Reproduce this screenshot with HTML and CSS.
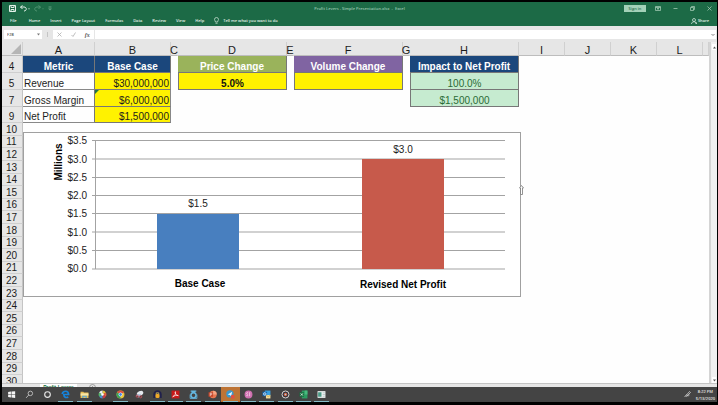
FILE: index.html
```html
<!DOCTYPE html>
<html lang="en">
<head>
<meta charset="utf-8">
<title>Profit Levers - Simple Presentation.xlsx - Excel</title>
<link rel="stylesheet" href="styles.css">
</head>
<body>
<header class="ribbon">
  <div class="titlebar">
    <div class="quick">
      <button aria-label="Save"><svg width="7" height="7" viewBox="0 0 14 14" fill="none" stroke="#e4f1e9" stroke-width="2"><path d="M1 1h12v12H1zM4 1v4h6V1M4 13V9h6v4"/></svg></button>
      <button aria-label="Undo"><svg width="10" height="7" viewBox="0 0 20 14" fill="none" stroke="#e4f1e9" stroke-width="2"><path d="M5 1L1 4l4 4M1 4h7c6 0 6 8 0 8"/><path d="M16 7h4l-2 2z" fill="#e4f1e9" stroke="none"/></svg></button>
      <button aria-label="Redo"><svg width="10" height="7" viewBox="0 0 20 14" fill="none" stroke="#4f9271" stroke-width="2"><path d="M9 1l4 3-4 4M13 4H6c-6 0-6 8 0 8"/><path d="M16 7h4l-2 2z" fill="#4f9271" stroke="none"/></svg></button>
      <button aria-label="Customize toolbar"><svg width="4" height="5" viewBox="0 0 8 10" fill="#5e9d7e"><path d="M1 1h6v2H1zM0 5h8L4 9z"/></svg></button>
    </div>
    <div class="doc-name">Profit Levers - Simple Presentation.xlsx &nbsp;-&nbsp; Excel</div>
    <div class="window-tools">
      <button class="signin">Sign in</button>
      <button aria-label="Ribbon options"><svg width="6" height="5" viewBox="0 0 12 10" fill="none" stroke="#a5cdb7" stroke-width="1.5"><path d="M1 1h10v8H1zM1 3h10M6 8V5M4 6l2-2 2 2"/></svg></button>
      <button aria-label="Minimize"><svg width="5" height="5" viewBox="0 0 10 10" stroke="#a5cdb7" stroke-width="1.5"><path d="M1 5h8"/></svg></button>
      <button aria-label="Restore"><svg width="5" height="5" viewBox="0 0 10 10" fill="none" stroke="#a5cdb7" stroke-width="1.5"><path d="M1 3h6v6H1zM3 3V1h6v6H7"/></svg></button>
      <button aria-label="Close"><svg width="5" height="5" viewBox="0 0 10 10" stroke="#a5cdb7" stroke-width="1.5"><path d="M1 1l8 8M9 1L1 9"/></svg></button>
    </div>
  </div>
  <nav class="tabs">
    <button class="file">File</button>
    <button>Home</button>
    <button>Insert</button>
    <button>Page Layout</button>
    <button>Formulas</button>
    <button>Data</button>
    <button>Review</button>
    <button>View</button>
    <button>Help</button>
    <button class="tell"><svg width="5" height="7" viewBox="0 0 10 14" fill="none" stroke="#d5e9dd" stroke-width="1.4"><path d="M3 10C3 8 1 7 1 5a4 4 0 0 1 8 0c0 2-2 3-2 5zM3 12.500h4"/></svg>Tell me what you want to do</button>
    <button class="share"><svg width="6" height="6" viewBox="0 0 12 12" fill="none" stroke="#e4f1e9" stroke-width="1.4"><circle cx="6" cy="4" r="3"/><path d="M1 12c0-6 10-6 10 0M8 10h4"/></svg>Share</button>
  </nav>
</header>

<div class="formula-bar">
  <div class="name-box"><input aria-label="Name box" value="F28"><svg width="3" height="3" viewBox="0 0 6 6" fill="#777"><path d="M0 1h6L3 5z"/></svg></div>
  <span class="grip"></span>
  <div class="entry-tools">
    <button aria-label="Cancel"><svg width="5" height="5" viewBox="0 0 10 10" stroke="#aaa" stroke-width="1.500"><path d="M1 1l8 8M9 1L1 9"/></svg></button>
    <button aria-label="Enter"><svg width="5" height="5" viewBox="0 0 10 10" fill="none" stroke="#aaa" stroke-width="1.500"><path d="M1 6l3 3 5-8"/></svg></button>
    <button class="fx" aria-label="Insert function">fx</button>
  </div>
  <div class="formula"><input aria-label="Formula"><svg width="4" height="4" viewBox="0 0 8 8" fill="none" stroke="#666" stroke-width="1.600"><path d="M1 2l3 3 3-3"/></svg></div>
</div>

<main class="workspace">
  <div class="sheet">
    <table>
      <colgroup><col class="c-num"><col class="c-a"><col class="c-b"><col class="c-gap"><col class="c-wide"><col class="c-gap"><col class="c-wide"><col class="c-gap"><col class="c-wide"><col class="c-std"><col class="c-std"><col class="c-std"><col class="c-std"><col></colgroup>
      <thead>
        <tr><th class="corner"><svg width="10" height="10" viewBox="0 0 10 10" fill="#b5b5b5"><path d="M10 0v10H0z"/></svg></th><th>A</th><th>B</th><th class="slim"><span>C</span></th><th>D</th><th class="slim"><span>E</span></th><th>F</th><th class="slim"><span>G</span></th><th>H</th><th>I</th><th>J</th><th>K</th><th>L</th><th></th></tr>
      </thead>
      <tbody class="model">
        <tr><th>4</th><td class="head navy">Metric</td><td class="head navy">Base Case</td><td></td><td class="head olive">Price Change</td><td></td><td class="head purple">Volume Change</td><td></td><td class="head navy">Impact to Net Profit</td></tr>
        <tr><th>5</th><td class="label">Revenue</td><td class="money">$30,000,000</td><td></td><td class="driver">5.0%</td><td></td><td class="driver"></td><td></td><td class="impact">100.0%</td></tr>
        <tr><th>7</th><td class="label">Gross Margin</td><td class="money flagged">$6,000,000</td><td></td><td></td><td></td><td></td><td></td><td class="impact">$1,500,000</td></tr>
        <tr><th>9</th><td class="label">Net Profit</td><td class="money">$1,500,000</td></tr>
      </tbody>
      <tbody class="blank">
        <tr><th>10</th></tr><tr><th>11</th></tr><tr><th>12</th></tr><tr><th>13</th></tr><tr><th>14</th></tr><tr><th>15</th></tr><tr><th>16</th></tr>
        <tr><th>17</th></tr><tr><th>18</th></tr><tr><th>19</th></tr><tr><th>20</th></tr><tr><th>21</th></tr><tr><th>22</th></tr><tr><th>23</th></tr>
        <tr><th>24</th></tr><tr><th>25</th></tr><tr><th>26</th></tr><tr><th>27</th></tr><tr><th>28</th></tr><tr><th>29</th></tr><tr><th>30</th></tr>
      </tbody>
    </table>
    <svg class="chart" width="498" height="165" viewBox="0 0 498 165" role="img" aria-label="Net profit in millions, base case and revised">
      <rect class="frame" x="0.500" y="0.500" width="497" height="164"/>
      <path class="lines" d="M69 8.500H482M69 27H482M69 45.500H482M69 63.500H482M69 81.500H482M69 100H482M69 118.500H482M69 137H482M72.500 8V137"/>
      <rect x="134" y="82" width="82" height="55" fill="#487fbf"/>
      <rect x="339" y="27" width="82" height="110" fill="#c75a4b"/>
      <g class="axis">
        <text x="64" y="12">$3.5</text><text x="64" y="31">$3.0</text><text x="64" y="49">$2.5</text><text x="64" y="67">$2.0</text><text x="64" y="85">$1.5</text><text x="64" y="104">$1.0</text><text x="64" y="122">$0.5</text><text x="64" y="140">$0.0</text>
      </g>
      <g class="values"><text x="175" y="75">$1.5</text><text x="380" y="21">$3.0</text></g>
      <g class="names"><text x="177" y="155">Base Case</text><text x="380" y="156">Revised Net Profit</text><text transform="translate(39 30) rotate(-90)">Millions</text></g>
    </svg>
    <svg class="pointer" width="5" height="10" viewBox="0 0 5 10" fill="#fff" stroke="#777" stroke-width="0.800"><path d="M2.500 .5L4.500 3H3.500V9.500H1.500V3H.5z"/></svg>
  </div>
  <div class="scroll">
    <button aria-label="Scroll up"><svg width="3" height="3" viewBox="0 0 6 6" fill="#555"><path d="M0 5h6L3 1z"/></svg></button>
    <button aria-label="Scroll down"><svg width="3" height="3" viewBox="0 0 6 6" fill="#555"><path d="M0 1h6L3 5z"/></svg></button>
  </div>
</main>

<div class="sheet-tabs"><button class="sheet-tab">Profit Levers</button><button class="add" aria-label="New sheet"><svg width="7" height="7" viewBox="0 0 14 14" fill="none" stroke="#888" stroke-width="1.500"><circle cx="7" cy="7" r="6"/><path d="M7 4v6M4 7h6"/></svg></button></div>

<footer class="taskbar">
  <div class="apps">
    <button aria-label="Start"><svg viewBox="0 0 16 16" fill="#f4f4f4"><path d="M2 3.500l5-.7v4.700H2zM8 2.600L14.500 2v5.500H8zM2 8.500h5v4.700l-5-.7zM8 8.500h6.500V14L8 13.300z"/></svg></button>
    <button aria-label="Search"><svg viewBox="0 0 16 16" fill="none" stroke="#c8c8c8" stroke-width="1.500"><circle cx="9.500" cy="6" r="4"/><path d="M6.500 9L2 14"/></svg></button>
    <button aria-label="Cortana"><svg viewBox="0 0 16 16" fill="none" stroke="#e8e8e8" stroke-width="2"><circle cx="8" cy="8" r="5"/></svg></button>
    <button class="open" aria-label="Edge"><svg viewBox="0 0 16 16" fill="none" stroke="#1683dc" stroke-width="3"><path d="M2 7C4 1 13 0 13.500 8H5c0 6 5 6 8 4.500"/></svg></button>
    <button class="open" aria-label="File Explorer"><svg viewBox="0 0 16 16"><path d="M1 3h5l1 1.500h8V14H1z" fill="#e9bd55"/><path d="M1 6h14v4H1z" fill="#f9e6a5"/><path d="M4 10h8v4h-2v-2H6v2H4z" fill="#55a6d6"/></svg></button>
    <button aria-label="Photos"><svg viewBox="0 0 16 16"><path d="M8 8V1a7 7 0 0 1 6 3.500z" fill="#e5c43c"/><path d="M8 8l6-3.500A7 7 0 0 1 14 11.500z" fill="#e25b40"/><path d="M8 8l6 3.500A7 7 0 0 1 8 15z" fill="#c93c46"/><path d="M8 8v7a7 7 0 0 1-6-3.500z" fill="#4b8fd0"/><path d="M8 8l-6 3.500A7 7 0 0 1 2 4.500z" fill="#57b56a"/><path d="M8 8L2 4.500A7 7 0 0 1 8 1z" fill="#e9eef0"/><circle cx="8" cy="8" r="2.200" fill="#fff"/></svg></button>
    <button class="open" aria-label="Chrome"><svg viewBox="0 0 16 16"><circle cx="8" cy="8" r="7" fill="#e8c13a"/><path d="M8 8L1.900 4.500A7 7 0 0 1 14.500 5.200H8z" fill="#dc4c3f"/><path d="M8 8v7A7 7 0 0 1 1.900 4.500z" fill="#36a35b"/><circle cx="8" cy="8" r="3.400" fill="#fff"/><circle cx="8" cy="8" r="2.500" fill="#4384e8"/></svg></button>
    <button aria-label="Snipping Tool"><svg viewBox="0 0 16 16"><ellipse cx="9" cy="6" rx="6" ry="4" fill="#e6e9ee" transform="rotate(-25 9 6)"/><path d="M2 10l6-2M6 13l4-5" stroke="#92b6d4" stroke-width="2"/><circle cx="4" cy="11" r="2" fill="none" stroke="#c84c54" stroke-width="1.500"/><circle cx="10" cy="12" r="2" fill="none" stroke="#c84c54" stroke-width="1.500"/></svg></button>
    <button class="open" aria-label="Audacity"><svg viewBox="0 0 16 16"><path d="M2 14V8a6 6 0 0 1 12 0v6" fill="none" stroke="#20204c" stroke-width="3"/><rect x="4.500" y="7" width="7" height="7" rx="2" fill="#f0a928"/><path d="M6 7V5h4v2" stroke="#efd06b" fill="none"/></svg></button>
    <button class="open" aria-label="Acrobat"><svg viewBox="0 0 16 16"><rect x="1" y="1" width="14" height="14" fill="#c91919"/><path d="M3 12c4-2 6-6 5-9-2 0 0 7 5 7-3-1-7 0-10 2z" fill="none" stroke="#fff" stroke-width="1.200"/></svg></button>
    <button class="open" aria-label="Snagit"><svg viewBox="0 0 16 16" fill="none" stroke="#65b9e2"><path d="M3 2h10M5 4h6" stroke-width="2"/><circle cx="8" cy="9.500" r="4.500" stroke-width="2.500"/><path d="M2 8v7h12V8" stroke-width="1.500"/></svg></button>
    <button class="open" aria-label="PowerPoint"><svg viewBox="0 0 16 16"><circle cx="9" cy="8" r="6.500" fill="#e87650"/><path d="M9 1.500A6.500 6.500 0 0 1 15.500 8H9z" fill="#f6a482"/><rect x="1" y="4" width="8" height="8" fill="#c3452a"/><path d="M4 10.500v-5h1.500a1.500 1.500 0 0 1 0 3H4" fill="none" stroke="#fff"/></svg></button>
    <button class="open alert" aria-label="Messenger"><svg viewBox="0 0 16 16"><circle cx="7" cy="7" r="6.500" fill="#3999cf"/><path d="M3 8l8-5-2 8-2-2z" fill="#eef7fc"/><circle cx="12" cy="12" r="3.500" fill="#e35040"/></svg></button>
    <button class="open" aria-label="Music"><svg viewBox="0 0 16 16"><circle cx="8" cy="8" r="7" fill="#cf70b0"/><path d="M7 5c-3-1-3 2-1 3s1 3-2 2M10 4v7" fill="none" stroke="#f8d9ec" stroke-width="1.400"/></svg></button>
    <button class="open" aria-label="Outlook"><svg viewBox="0 0 16 16"><rect x="5" y="1" width="10" height="9" fill="#39a0e0"/><rect x="1" y="3" width="8" height="8" fill="#0f68b8"/><circle cx="5" cy="7" r="2.200" fill="none" stroke="#fff" stroke-width="1.300"/><path d="M7 9h8v6H7z" fill="#f4dd9b"/><path d="M7 9l4 3 4-3" fill="none" stroke="#c69c3e"/></svg></button>
    <button class="open" aria-label="Recorder"><svg viewBox="0 0 16 16"><circle cx="8" cy="8" r="6.200" fill="#30303c" stroke="#e9e4e0" stroke-width="1.600"/><circle cx="8" cy="8" r="3" fill="#d9683f"/><circle cx="8" cy="8" r="1.300" fill="#a9cdf0"/></svg></button>
    <button class="open" aria-label="Excel"><svg viewBox="0 0 16 16"><rect x="5" y="1" width="10" height="14" fill="#2c9c62"/><path d="M10 1h5v7h-5z" fill="#48ba7e"/><rect x="1" y="4" width="8" height="8" fill="#15703f"/><path d="M3 6l4 4M7 6l-4 4" stroke="#fff" stroke-width="1.300"/></svg></button>
    <button class="open" aria-label="Notes"><svg viewBox="0 0 16 16"><rect x="1" y="2" width="14" height="12" fill="#eef3f3"/><path d="M2 4h6v8H2z" fill="#4b9a86"/><path d="M10 5h4M10 8h4M10 11h4" stroke="#98aaaa"/></svg></button>
  </div>
  <div class="tray">
    <svg width="7" height="7" viewBox="0 0 14 14" fill="none" stroke="#d0d0d0" stroke-width="1.600"><path d="M1 12c2-5 5 2 6-3M5 8l6-7 2 2-6 6zM3 9c3-3 6 3 8-1"/></svg>
    <div class="clock"><time>8:22 PM</time><time>5/13/2020</time></div>
  </div>
</footer>
</body>
</html>
```
FILE: styles.css
```css
* { box-sizing: border-box; }
body {
  margin: 0;
  padding: 2px 1px 3px 2px;
  height: 100vh;
  overflow: hidden;
  display: flex;
  flex-direction: column;
  background: #000;
  font: 10px/12px "Liberation Sans", Arial, sans-serif;
  color: #1c1c1c;
}
button, input {
  margin: 0;
  padding: 0;
  border: 0;
  border-radius: 0;
  background: none;
  color: inherit;
  font: inherit;
  min-width: 0;
}
svg { display: block; flex: none; }

.ribbon, .formula-bar, .taskbar { font: 600 4px/7px "Open Sans", "Noto Sans", sans-serif; }
.ribbon { flex: none; background: #1c6a46; color: #e4f1e9; }
.titlebar {
  display: grid;
  grid-template-columns: 1fr auto 1fr;
  align-items: center;
  height: 13px;
}
.quick { display: flex; align-items: center; gap: 4px; padding-left: 7px; }
.doc-name { color: #9bc7af; }
.window-tools { display: flex; align-items: center; justify-content: flex-end; gap: 12px; padding-right: 5px; }
.signin { width: 22px; height: 7px; margin-right: -3px; background: #a3d1b8; color: #2b7150; }
.tabs { display: flex; align-items: center; gap: 10px; height: 11px; padding: 0 8px; }
.file { margin-right: 2px; }
.tell, .share { display: flex; align-items: center; gap: 4px; }
.share { margin-left: auto; gap: 1px; }

.formula-bar {
  flex: none;
  display: flex;
  align-items: center;
  height: 16px;
  padding: 1px 1px 0 2px;
  background: #e6e6e6;
  color: #555;
}
.name-box, .entry-tools, .formula { display: flex; align-items: center; height: 9px; background: #fff; }
.name-box { width: 38px; padding: 0 2px 0 3px; }
.name-box input, .formula input { flex: 1; height: 9px; }
.grip { width: 1px; height: 5px; margin: 0 5px; background: #c4c4c4; }
.entry-tools { width: 41px; justify-content: space-around; }
.fx { font: italic bold 6px/8px "Liberation Serif", serif; }
.formula { flex: 1; margin-left: 1px; padding-right: 1px; }

.workspace { flex: 1; min-height: 0; display: flex; background: #e6e6e6; }
.sheet { position: relative; flex: 1; overflow: hidden; background: #fefefe; }
table { width: 100%; table-layout: fixed; border-collapse: separate; border-spacing: 0; }
.c-num { width: 21px; }
.c-a { width: 72px; }
.c-b { width: 76px; }
.c-gap { width: 7px; }
.c-wide { width: 109px; }
.c-std { width: 46px; }
th, td { padding: 0; vertical-align: bottom; white-space: nowrap; }
th { background: #e6e6e6; font-weight: normal; text-align: center; }
thead th { height: 14px; font-size: 11px; line-height: 10px; border-right: 1px solid #d0d0d0; border-bottom: 1px solid #bdbdbd; }
thead .slim { border-right-color: #e6e6e6; }
.slim span { display: flex; justify-content: center; }
.corner svg { margin: 0 1px 1px auto; }
tbody th { border-right: 1px solid #c4c4c4; border-bottom: 1px solid #cfcfcf; padding-right: 1px; }
.model th, .model td { height: 17px; line-height: 10px; }
.model tr:last-child > * { height: 16px; }
.blank th { height: 13px; line-height: 10px; }
.blank tr:nth-child(5n+2) th, .blank tr:nth-child(5n) th { height: 12px; }
.head { color: #fff; font-weight: bold; text-align: center; border-right: 1px solid #777; border-bottom: 1px solid #777; }
.navy { background: #1b477c; }
.olive { background: #9ab35b; }
.purple { background: #8064a2; }
.label { padding-left: 1px; border-right: 1px solid #777; border-bottom: 1px solid #888; }
.money { position: relative; padding-right: 1px; background: #fff200; text-align: right; border-right: 1px solid #888; border-bottom: 1px solid #777; }
.flagged::before { content: ""; position: absolute; left: 0; top: 0; border-top: 4px solid #217346; border-right: 4px solid transparent; }
.driver { background: #fff200; color: #111; font-weight: bold; text-align: center; border: 1px solid #777; border-top: 0; }
.impact { background: #c6ebd0; color: #2a6b35; text-align: center; border: 1px solid #777; border-top: 0; }

.chart { position: absolute; left: 21px; top: 90px; }
.frame { fill: #fff; stroke: #a0a0a0; }
.lines { fill: none; stroke: #a3a3a3; }
.chart text { fill: #222; }
.axis text { text-anchor: end; }
.values text, .names text { text-anchor: middle; }
.chart .names text { fill: #000; font-weight: bold; }
.pointer { position: absolute; left: 517px; top: 143px; }

.scroll {
  display: flex;
  flex-direction: column;
  justify-content: space-between;
  width: 8px;
  padding: 2px 1px 0;
  border-left: 2px solid #d4d4d4;
  background: #f0f0f0;
}
.scroll button { display: grid; place-items: center; height: 6px; background: #fff; }

.sheet-tabs { flex: none; display: flex; height: 4px; overflow: hidden; padding-left: 38px; background: #e6e6e6; border-top: 1px solid #c4c4c4; }
.sheet-tab { width: 37px; background: #fff; color: #217346; font: bold 5px/7px "Liberation Sans", sans-serif; overflow: hidden; align-self: flex-start; }
.add { margin-left: 12px; align-self: flex-start; }

.taskbar { flex: none; display: flex; height: 15px; background: #444; color: #e8e8e8; }
.apps { display: grid; grid-template-columns: repeat(18, 1fr); width: 46%; }
.apps button { display: grid; place-items: center; }
.apps svg { width: 9px; height: 9px; }
.open { background: linear-gradient(#86bcc8, #86bcc8) center bottom / 15px 1px no-repeat; }
.alert { background-color: #bd7435; }
.tray { display: flex; align-items: center; gap: 5px; margin-left: auto; padding-right: 2px; }
.clock { display: grid; text-align: center; }
```
